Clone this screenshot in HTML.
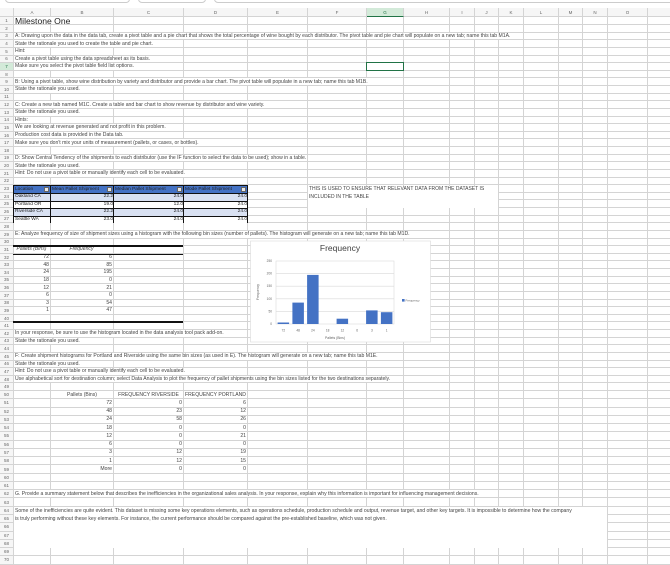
<!DOCTYPE html>
<html><head><meta charset="utf-8"><style>
*{margin:0;padding:0;box-sizing:border-box}
body{width:670px;height:565px;overflow:hidden;background:#fff;font-family:"Liberation Sans",Arial,sans-serif;color:#444;position:relative}
#sheet{position:absolute;left:0;top:17px;width:670px;height:548px;
background-image:
linear-gradient(to right,transparent 13px,#d4d4d4 13px,#d4d4d4 14px,transparent 14px),
linear-gradient(to right,transparent 50px,#d4d4d4 50px,#d4d4d4 51px,transparent 51px),
linear-gradient(to right,transparent 113px,#d4d4d4 113px,#d4d4d4 114px,transparent 114px),
linear-gradient(to right,transparent 183px,#d4d4d4 183px,#d4d4d4 184px,transparent 184px),
linear-gradient(to right,transparent 247px,#d4d4d4 247px,#d4d4d4 248px,transparent 248px),
linear-gradient(to right,transparent 307px,#d4d4d4 307px,#d4d4d4 308px,transparent 308px),
linear-gradient(to right,transparent 366px,#d4d4d4 366px,#d4d4d4 367px,transparent 367px),
linear-gradient(to right,transparent 403px,#d4d4d4 403px,#d4d4d4 404px,transparent 404px),
linear-gradient(to right,transparent 449px,#d4d4d4 449px,#d4d4d4 450px,transparent 450px),
linear-gradient(to right,transparent 474px,#d4d4d4 474px,#d4d4d4 475px,transparent 475px),
linear-gradient(to right,transparent 498px,#d4d4d4 498px,#d4d4d4 499px,transparent 499px),
linear-gradient(to right,transparent 523px,#d4d4d4 523px,#d4d4d4 524px,transparent 524px),
linear-gradient(to right,transparent 558px,#d4d4d4 558px,#d4d4d4 559px,transparent 559px),
linear-gradient(to right,transparent 582px,#d4d4d4 582px,#d4d4d4 583px,transparent 583px),
linear-gradient(to right,transparent 607px,#d4d4d4 607px,#d4d4d4 608px,transparent 608px),
linear-gradient(to right,transparent 647px,#d4d4d4 647px,#d4d4d4 648px,transparent 648px);}
.r{position:relative;height:7.63px;border-bottom:1px solid #d4d4d4;width:670px}
.r2{position:relative;height:8.27px;border-bottom:1px solid #d4d4d4;width:670px}
.n{position:absolute;left:0;top:0;width:13px;height:100%;background:#f6f6f6;text-align:center;font-size:4.5px;color:#666;display:flex;align-items:center;justify-content:center;font-style:normal}
.t{position:absolute;top:0;height:100%;display:flex;align-items:center;white-space:nowrap;font-size:5.1px;background:#fff;padding-right:1px}
.v{position:absolute;top:0;height:100%;display:flex;align-items:center;white-space:nowrap;font-size:5.1px}
#hdr{position:absolute;left:0;top:8px;width:670px;height:9px;background:#f6f6f6;border-bottom:1px solid #d4d4d4}
#hdr span{position:absolute;top:0;height:9px;font-size:4.5px;color:#666;display:flex;align-items:center;justify-content:center;border-right:1px solid #d4d4d4}
</style></head><body>
<div style="position:absolute;left:5px;top:-6px;width:125px;height:9px;border:1px solid #ccc;border-radius:4px"></div>
<div style="position:absolute;left:138px;top:-6px;width:68px;height:9px;border:1px solid #ccc;border-radius:4px"></div>
<div style="position:absolute;left:214px;top:-6px;width:460px;height:9px;border:1px solid #ccc;border-radius:4px"></div>
<div id="hdr">
<span style="left:0;width:14px"></span>
<span style="left:14px;width:37px">A</span><span style="left:51px;width:63px">B</span><span style="left:114px;width:70px">C</span><span style="left:184px;width:64px">D</span><span style="left:248px;width:60px">E</span><span style="left:308px;width:59px">F</span><span style="left:367px;width:37px;background:#d3ead9;border-bottom:1.5px solid #217346;color:#217346">G</span><span style="left:404px;width:46px">H</span><span style="left:450px;width:25px">I</span><span style="left:475px;width:24px">J</span><span style="left:499px;width:25px">K</span><span style="left:524px;width:35px">L</span><span style="left:559px;width:24px">M</span><span style="left:583px;width:25px">N</span><span style="left:608px;width:40px">O</span>
</div>
<div id="sheet">
<div class="r" style="height:8px"><i class="n">1</i><span class="t" style="left:15px;font-size:8.6px;color:#222">Milestone One</span></div>
<div class="r"><i class="n">2</i></div>
<div class="r"><i class="n">3</i><span class="t" style="left:15px">A: Drawing upon the data in the data tab, create a pivot table and a pie chart that shows the total percentage of wine bought by each distributor. The pivot table and pie chart will populate on a new tab; name this tab M1A.</span></div>
<div class="r"><i class="n">4</i><span class="t" style="left:15px">State the rationale you used to create the table and pie chart.</span></div>
<div class="r"><i class="n">5</i><span class="t" style="left:15px">Hint:</span></div>
<div class="r"><i class="n">6</i><span class="t" style="left:15px">Create a pivot table using the data spreadsheet as its basis.</span></div>
<div class="r"><i class="n" style="background:#d3ead9;color:#217346">7</i><span class="t" style="left:15px">Make sure you select the pivot table field list options.</span><span style="position:absolute;left:366px;top:-1px;width:38px;height:9px;border:1.5px solid #217346"></span></div>
<div class="r"><i class="n">8</i></div>
<div class="r"><i class="n">9</i><span class="t" style="left:15px">B: Using a pivot table, show wine distribution by variety and distributor and provide a bar chart. The pivot table will populate in a new tab; name this tab M1B.</span></div>
<div class="r"><i class="n">10</i><span class="t" style="left:15px">State the rationale you used.</span></div>
<div class="r"><i class="n">11</i></div>
<div class="r"><i class="n">12</i><span class="t" style="left:15px">C: Create a new tab named M1C. Create a table and bar chart to show revenue by distributor and wine variety.</span></div>
<div class="r"><i class="n">13</i><span class="t" style="left:15px">State the rationale you used.</span></div>
<div class="r"><i class="n">14</i><span class="t" style="left:15px">Hints:</span></div>
<div class="r"><i class="n">15</i><span class="t" style="left:15px">We are looking at revenue generated and not profit in this problem.</span></div>
<div class="r"><i class="n">16</i><span class="t" style="left:15px">Production cost data is provided in the Data tab.</span></div>
<div class="r"><i class="n">17</i><span class="t" style="left:15px">Make sure you don't mix your units of measurement (pallets, or cases, or bottles).</span></div>
<div class="r"><i class="n">18</i></div>
<div class="r"><i class="n">19</i><span class="t" style="left:15px">D: Show Central Tendency of the shipments to each distributor (use the IF function to select the data to be used); show in a table.</span></div>
<div class="r"><i class="n">20</i><span class="t" style="left:15px">State the rationale you used.</span></div>
<div class="r"><i class="n">21</i><span class="t" style="left:15px">Hint: Do not use a pivot table or manually identify each cell to be evaluated.</span></div>
<div class="r"><i class="n">22</i></div>
<div class="r"><i class="n">23</i></div>
<div class="r"><i class="n">24</i></div>
<div class="r"><i class="n">25</i></div>
<div class="r"><i class="n">26</i></div>
<div class="r"><i class="n">27</i></div>
<div class="r"><i class="n">28</i></div>
<div class="r"><i class="n">29</i><span class="t" style="left:15px">E: Analyze frequency of size of shipment sizes using a histogram with the following bin sizes (number of pallets). The histogram will generate on a new tab; name this tab M1D.</span></div>
<div class="r"><i class="n">30</i></div>
<div class="r"><i class="n">31</i><span class="t" style="left:14px;width:36px;justify-content:center;font-style:italic">Pallets (Bins)</span><span class="t" style="left:51px;width:62px;justify-content:center;font-style:italic">Frequency</span></div>
<div class="r"><i class="n">32</i><span class="v" style="right:621px">72</span><span class="v" style="right:558px">6</span></div>
<div class="r"><i class="n">33</i><span class="v" style="right:621px">48</span><span class="v" style="right:558px">85</span></div>
<div class="r"><i class="n">34</i><span class="v" style="right:621px">24</span><span class="v" style="right:558px">195</span></div>
<div class="r"><i class="n">35</i><span class="v" style="right:621px">18</span><span class="v" style="right:558px">0</span></div>
<div class="r"><i class="n">36</i><span class="v" style="right:621px">12</span><span class="v" style="right:558px">21</span></div>
<div class="r"><i class="n">37</i><span class="v" style="right:621px">6</span><span class="v" style="right:558px">0</span></div>
<div class="r"><i class="n">38</i><span class="v" style="right:621px">3</span><span class="v" style="right:558px">54</span></div>
<div class="r"><i class="n">39</i><span class="v" style="right:621px">1</span><span class="v" style="right:558px">47</span></div>
<div class="r"><i class="n">40</i></div>
<div class="r"><i class="n">41</i></div>
<div class="r"><i class="n">42</i><span class="t" style="left:15px">In your response, be sure to use the histogram located in the data analysis tool pack add-on.</span></div>
<div class="r"><i class="n">43</i><span class="t" style="left:15px">State the rationale you used.</span></div>
<div class="r"><i class="n">44</i></div>
<div class="r"><i class="n">45</i><span class="t" style="left:15px">F: Create shipment histograms for Portland and Riverside using the same bin sizes (as used in E). The histogram will generate on a new tab; name this tab M1E.</span></div>
<div class="r"><i class="n">46</i><span class="t" style="left:15px">State the rationale you used.</span></div>
<div class="r"><i class="n">47</i><span class="t" style="left:15px">Hint: Do not use a pivot table or manually identify each cell to be evaluated.</span></div>
<div class="r"><i class="n">48</i><span class="t" style="left:15px">Use alphabetical sort for destination column; select Data Analysis to plot the frequency of pallet shipments using the bin sizes listed for the two destinations separately.</span></div>
<div class="r"><i class="n">49</i></div>
<div class="r2"><i class="n">50</i><span class="v" style="left:51px;width:62px;justify-content:center">Pallets (Bins)</span><span class="v" style="left:114px;width:69px;justify-content:center">FREQUENCY RIVERSIDE</span><span class="v" style="left:184px;width:63px;justify-content:center">FREQUENCY PORTLAND</span></div>
<div class="r2"><i class="n">51</i><span class="v" style="right:558px">72</span><span class="v" style="right:488px">0</span><span class="v" style="right:424px">6</span></div>
<div class="r2"><i class="n">52</i><span class="v" style="right:558px">48</span><span class="v" style="right:488px">23</span><span class="v" style="right:424px">12</span></div>
<div class="r2"><i class="n">53</i><span class="v" style="right:558px">24</span><span class="v" style="right:488px">58</span><span class="v" style="right:424px">26</span></div>
<div class="r2"><i class="n">54</i><span class="v" style="right:558px">18</span><span class="v" style="right:488px">0</span><span class="v" style="right:424px">0</span></div>
<div class="r2"><i class="n">55</i><span class="v" style="right:558px">12</span><span class="v" style="right:488px">0</span><span class="v" style="right:424px">21</span></div>
<div class="r2"><i class="n">56</i><span class="v" style="right:558px">6</span><span class="v" style="right:488px">0</span><span class="v" style="right:424px">0</span></div>
<div class="r2"><i class="n">57</i><span class="v" style="right:558px">3</span><span class="v" style="right:488px">12</span><span class="v" style="right:424px">19</span></div>
<div class="r2"><i class="n">58</i><span class="v" style="right:558px">1</span><span class="v" style="right:488px">12</span><span class="v" style="right:424px">15</span></div>
<div class="r2"><i class="n">59</i><span class="v" style="right:558px">More</span><span class="v" style="right:488px">0</span><span class="v" style="right:424px">0</span></div>
<div class="r2"><i class="n">60</i></div>
<div class="r2"><i class="n">61</i></div>
<div class="r2"><i class="n">62</i><span class="t" style="left:15px">G. Provide a summary statement below that describes the inefficiencies in the organizational sales analysis. In your response, explain why this information is important for influencing management decisions.</span></div>
<div class="r2"><i class="n">63</i></div>
<div class="r2"><i class="n">64</i></div>
<div class="r2"><i class="n">65</i></div>
<div class="r2"><i class="n">66</i></div>
<div class="r2"><i class="n">67</i></div>
<div class="r2"><i class="n">68</i></div>
<div class="r2"><i class="n">69</i></div>
<div class="r2"><i class="n">70</i></div>
</div>

<div style="position:absolute;left:14px;top:507px;width:593px;height:41px;background:#fff;font-size:5.1px;line-height:8.27px;white-space:nowrap;padding-left:1px">Some of the inefficiencies are quite evident. This dataset is missing some key operations elements, such as operations schedule, production schedule and output, revenue target, and other key targets. It is impossible to determine how the company<br>is truly performing without these key elements. For instance, the current performance should be compared against the pre-established baseline, which was not given.</div>

<div style="position:absolute;left:308px;top:185.5px;width:190px;height:22.5px;background:#fff;font-size:5px;line-height:7.6px;padding-left:1px;padding-top:0.5px">THIS IS USED TO ENSURE THAT RELEVANT DATA FROM THE DATASET IS<br>INCLUDED IN THE TABLE</div>

<div style="position:absolute;left:13px;top:185.3px;width:235px;height:38.2px;border:1px solid #111;font-size:4.8px;color:#222">
<div style="height:7.63px;background:#4472c4;display:flex;border-bottom:1px solid #111">
<div style="width:37px;border-right:1px solid #111;position:relative;padding-left:1px;line-height:7px">Location<span style="position:absolute;right:1px;top:1px;width:5px;height:5px;background:#e8e8e8;border:0.5px solid #666"></span></div>
<div style="width:63px;border-right:1px solid #111;position:relative;padding-left:1px;line-height:7px">Mean Pallet Shipment<span style="position:absolute;right:1px;top:1px;width:5px;height:5px;background:#e8e8e8;border:0.5px solid #666"></span></div>
<div style="width:70px;border-right:1px solid #111;position:relative;padding-left:1px;line-height:7px">Median Pallet Shipment<span style="position:absolute;right:1px;top:1px;width:5px;height:5px;background:#e8e8e8;border:0.5px solid #666"></span></div>
<div style="flex:1;position:relative;padding-left:1px;line-height:7px">Mode Pallet Shipment<span style="position:absolute;right:1px;top:1px;width:5px;height:5px;background:#e8e8e8;border:0.5px solid #666"></span></div>
</div>
<div style="height:7.63px;background:#d9e1f2;display:flex;border-bottom:1px solid #111;line-height:6.6px"><div style="width:37px;border-right:1px solid #111;padding-left:1px">Oakland CA</div><div style="width:63px;border-right:1px solid #111;text-align:right">22.2</div><div style="width:70px;border-right:1px solid #111;text-align:right">24.0</div><div style="flex:1;text-align:right">24.0</div></div>
<div style="height:7.63px;background:#fff;display:flex;border-bottom:1px solid #111;line-height:6.6px"><div style="width:37px;border-right:1px solid #111;padding-left:1px">Portland OR</div><div style="width:63px;border-right:1px solid #111;text-align:right">19.0</div><div style="width:70px;border-right:1px solid #111;text-align:right">12.0</div><div style="flex:1;text-align:right">24.0</div></div>
<div style="height:7.63px;background:#d9e1f2;display:flex;border-bottom:1px solid #111;line-height:6.6px"><div style="width:37px;border-right:1px solid #111;padding-left:1px">Riverside CA</div><div style="width:63px;border-right:1px solid #111;text-align:right">22.2</div><div style="width:70px;border-right:1px solid #111;text-align:right">24.0</div><div style="flex:1;text-align:right">24.0</div></div>
<div style="height:6px;background:#fff;display:flex;line-height:6px"><div style="width:37px;border-right:1px solid #111;padding-left:1px">Seattle WA</div><div style="width:63px;border-right:1px solid #111;text-align:right">23.0</div><div style="width:70px;border-right:1px solid #111;text-align:right">24.0</div><div style="flex:1;text-align:right">24.0</div></div>
</div>

<div style="position:absolute;left:13px;top:245px;width:170px;height:2px;background:#111"></div>
<div style="position:absolute;left:13px;top:253.5px;width:170px;height:0.8px;background:#111"></div>
<div style="position:absolute;left:13px;top:321px;width:170px;height:2px;background:#111"></div>

<svg style="position:absolute;left:0;top:0" width="670" height="565" font-family="Liberation Sans, Arial, sans-serif">
<rect x="250.5" y="241" width="180" height="101" fill="#fff" stroke="#d9d9d9" stroke-width="0.6"/>
<text x="340" y="251" font-size="8.5" text-anchor="middle" fill="#404040">Frequency</text>
<g stroke="#d9d9d9" stroke-width="0.6">
<rect x="276" y="261" width="118" height="63" fill="none"/>
<line x1="276" y1="273.6" x2="394" y2="273.6"/><line x1="276" y1="286.2" x2="394" y2="286.2"/>
<line x1="276" y1="298.8" x2="394" y2="298.8"/><line x1="276" y1="311.4" x2="394" y2="311.4"/>
</g>
<g font-size="3.2" fill="#666" text-anchor="end">
<text x="272" y="262">250</text><text x="272" y="274.6">200</text><text x="272" y="287.2">150</text><text x="272" y="299.8">100</text><text x="272" y="312.4">50</text><text x="272" y="325">0</text>
</g>
<g fill="#4472c4">
<rect x="277.6" y="322.5" width="11.5" height="1.5"/>
<rect x="292.4" y="302.6" width="11.5" height="21.4"/>
<rect x="307.1" y="274.9" width="11.5" height="49.1"/>
<rect x="336.6" y="318.7" width="11.5" height="5.3"/>
<rect x="366.1" y="310.4" width="11.5" height="13.6"/>
<rect x="380.9" y="312.2" width="11.5" height="11.8"/>
</g>
<g font-size="3.2" fill="#666" text-anchor="middle">
<text x="283.4" y="331.5">72</text><text x="298.1" y="331.5">48</text><text x="312.9" y="331.5">24</text><text x="327.6" y="331.5">18</text><text x="342.4" y="331.5">12</text><text x="357.1" y="331.5">6</text><text x="371.9" y="331.5">3</text><text x="386.6" y="331.5">1</text>
<text x="335" y="339" font-size="3.4">Pallets (Bins)</text>
<text transform="translate(259,292) rotate(-90)" font-size="3.4">Frequency</text>
</g>
<rect x="402" y="299" width="2.6" height="2.6" fill="#4472c4"/>
<text x="405.5" y="301.5" font-size="3" fill="#666">Frequency</text>
</svg>
</body></html>
